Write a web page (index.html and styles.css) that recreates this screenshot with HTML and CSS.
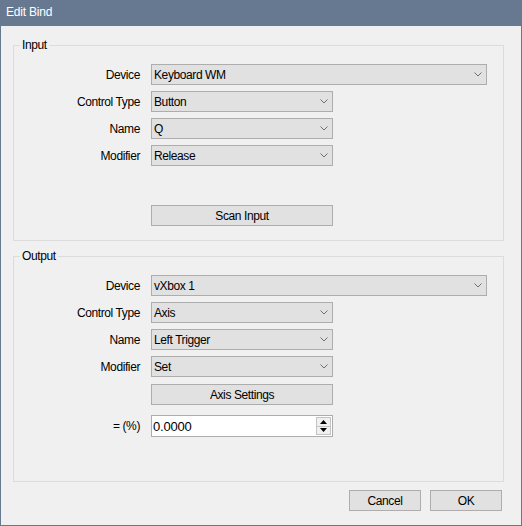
FILE: index.html
```html
<!DOCTYPE html>
<html>
<head>
<meta charset="utf-8">
<link rel="stylesheet" href="styles.css">
</head>
<body>
<div class="window">
  <div class="titlebar">Edit Bind</div>
  <div class="client">
    <fieldset class="group group-input">
      <legend>Input</legend>
      <div class="row">
        <label class="lbl">Device</label>
        <div class="combo wide"><span>Keyboard WM</span><svg class="chev" viewBox="0 0 8 5" width="8" height="5"><path d="M0.5 0.5 L4 4 L7.5 0.5" fill="none" stroke="#707070" stroke-width="1"/></svg></div>
      </div>
      <div class="row">
        <label class="lbl">Control Type</label>
        <div class="combo"><span>Button</span><svg class="chev" viewBox="0 0 8 5" width="8" height="5"><path d="M0.5 0.5 L4 4 L7.5 0.5" fill="none" stroke="#707070" stroke-width="1"/></svg></div>
      </div>
      <div class="row">
        <label class="lbl">Name</label>
        <div class="combo"><span>Q</span><svg class="chev" viewBox="0 0 8 5" width="8" height="5"><path d="M0.5 0.5 L4 4 L7.5 0.5" fill="none" stroke="#707070" stroke-width="1"/></svg></div>
      </div>
      <div class="row">
        <label class="lbl">Modifier</label>
        <div class="combo"><span>Release</span><svg class="chev" viewBox="0 0 8 5" width="8" height="5"><path d="M0.5 0.5 L4 4 L7.5 0.5" fill="none" stroke="#707070" stroke-width="1"/></svg></div>
      </div>
      <div class="row scan-row">
        <span class="lbl"></span>
        <div class="btn field-btn">Scan Input</div>
      </div>
    </fieldset>

    <fieldset class="group group-output">
      <legend>Output</legend>
      <div class="row">
        <label class="lbl">Device</label>
        <div class="combo wide"><span>vXbox 1</span><svg class="chev" viewBox="0 0 8 5" width="8" height="5"><path d="M0.5 0.5 L4 4 L7.5 0.5" fill="none" stroke="#707070" stroke-width="1"/></svg></div>
      </div>
      <div class="row">
        <label class="lbl">Control Type</label>
        <div class="combo"><span>Axis</span><svg class="chev" viewBox="0 0 8 5" width="8" height="5"><path d="M0.5 0.5 L4 4 L7.5 0.5" fill="none" stroke="#707070" stroke-width="1"/></svg></div>
      </div>
      <div class="row">
        <label class="lbl">Name</label>
        <div class="combo"><span>Left Trigger</span><svg class="chev" viewBox="0 0 8 5" width="8" height="5"><path d="M0.5 0.5 L4 4 L7.5 0.5" fill="none" stroke="#707070" stroke-width="1"/></svg></div>
      </div>
      <div class="row">
        <label class="lbl">Modifier</label>
        <div class="combo"><span>Set</span><svg class="chev" viewBox="0 0 8 5" width="8" height="5"><path d="M0.5 0.5 L4 4 L7.5 0.5" fill="none" stroke="#707070" stroke-width="1"/></svg></div>
      </div>
      <div class="row axis-row">
        <span class="lbl"></span>
        <div class="btn field-btn">Axis Settings</div>
      </div>
      <div class="row num-row">
        <label class="lbl">= (%)</label>
        <div class="numeric">
          <span class="num-val">0.0000</span>
          <div class="spin">
            <div class="spin-btn"><svg viewBox="0 0 7 4" width="7" height="4"><path d="M0 4 L3.5 0 L7 4 Z" fill="#000"/></svg></div>
            <div class="spin-btn"><svg viewBox="0 0 7 4" width="7" height="4"><path d="M0 0 L3.5 4 L7 0 Z" fill="#000"/></svg></div>
          </div>
        </div>
      </div>
    </fieldset>

    <div class="footer">
      <div class="btn dlg-btn">Cancel</div>
      <div class="btn dlg-btn">OK</div>
    </div>
  </div>
</div>
</body>
</html>
```

FILE: styles.css
```css
html, body {
  margin: 0;
  padding: 0;
  background: #f0f0f0;
}

body {
  font-family: "Liberation Sans", Arial, sans-serif;
  font-size: 12px;
  letter-spacing: -0.4px;
  color: #000;
}

.window {
  width: 522px;
  height: 526px;
  box-sizing: border-box;
  border: 1px solid #677891;
  border-top: none;
  display: flex;
  flex-direction: column;
  background: #f0f0f0;
}

.titlebar {
  height: 26px;
  line-height: 25px;
  margin: 0 -1px;
  padding-left: 6px;
  background: #677891;
  color: #fff;
  font-size: 12px;
  letter-spacing: -0.2px;
}

.client {
  flex: 1;
  padding: 12px 17px 0 12px;
  display: flex;
  flex-direction: column;
}

.group {
  margin: 0;
  padding: 12px 0 14px 0;
  border: 1px solid #dcdcdc;
  min-width: 0;
}

.group legend {
  margin-left: 6px;
  padding: 0 2px;
  line-height: 14px;
  height: 14px;
}

.group-output {
  margin-top: 8px;
  padding-bottom: 44px;
}

.row {
  display: flex;
  align-items: center;
  height: 21px;
  margin-bottom: 6px;
}

.lbl {
  width: 126px;
  flex: none;
  text-align: right;
  margin-right: 11px;
}

.combo {
  box-sizing: border-box;
  width: 182px;
  height: 21px;
  background: #e1e1e1;
  border: 1px solid #adadad;
  display: flex;
  align-items: center;
  justify-content: space-between;
  padding: 0 4px 0 2px;
}

.combo.wide {
  width: 336px;
}

.chev {
  display: block;
}

.btn {
  box-sizing: border-box;
  height: 21px;
  background: #e1e1e1;
  border: 1px solid #adadad;
  display: flex;
  align-items: center;
  justify-content: center;
}

.field-btn {
  width: 182px;
}

.scan-row {
  margin-top: 39px;
  margin-bottom: 0;
}

.axis-row {
  margin-top: 7px;
  margin-bottom: 10px;
}

.num-row {
  height: 22px;
  margin-bottom: 0;
}

.numeric {
  box-sizing: border-box;
  width: 182px;
  height: 22px;
  background: #fff;
  border: 1px solid #adadad;
  display: flex;
  align-items: center;
  justify-content: space-between;
  padding: 0 1px 0 1px;
}

.num-val {
  font-size: 13px;
  letter-spacing: -0.2px;
}

.spin {
  display: flex;
  flex-direction: column;
  width: 15px;
  height: 18px;
  border: 1px solid #c4c4c4;
  box-sizing: border-box;
}

.spin-btn {
  flex: 1;
  display: flex;
  align-items: center;
  justify-content: center;
  background: #f0f0f0;
}

.spin-btn + .spin-btn {
  border-top: 1px solid #c4c4c4;
}

.spin-btn svg {
  display: block;
}

.footer {
  display: flex;
  justify-content: flex-end;
  gap: 9px;
  margin-top: 8px;
  padding-right: 2px;
}

.dlg-btn {
  width: 72px;
}
```
